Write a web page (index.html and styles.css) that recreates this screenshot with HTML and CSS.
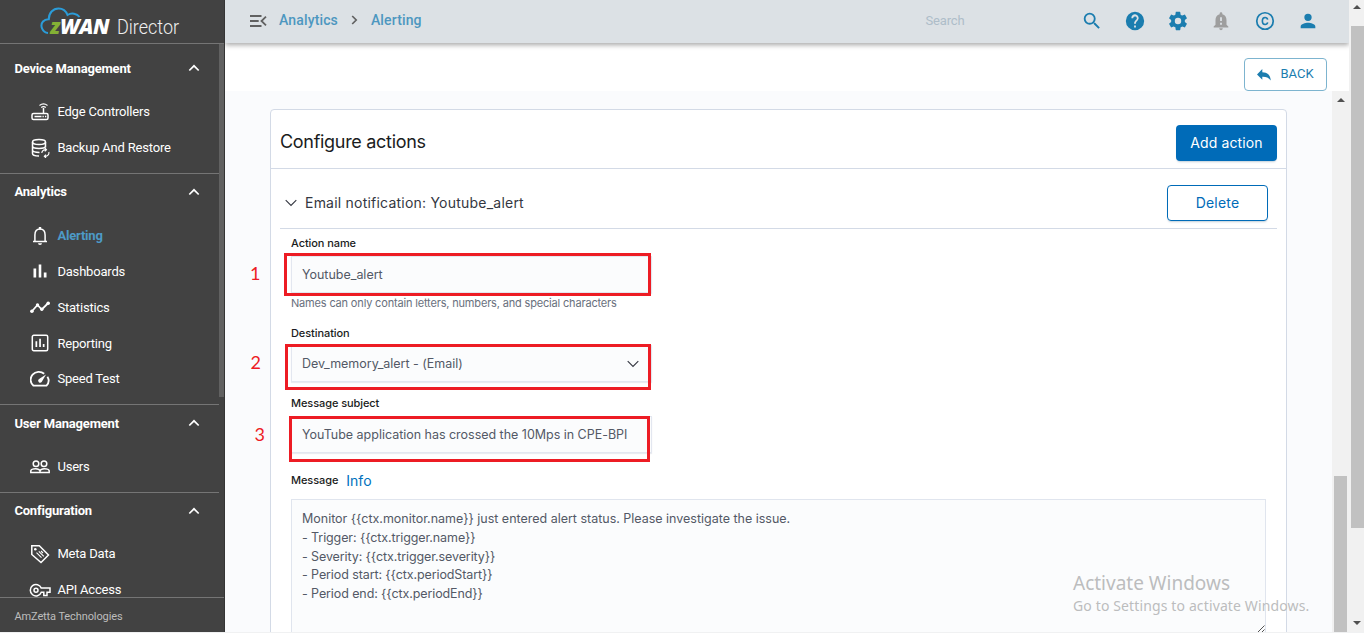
FILE: index.html
```html
<!DOCTYPE html>
<html lang="en">
<head>
<meta charset="utf-8">
<title>zWAN Director</title>
<link rel="stylesheet" href="styles.css">
</head>
<body>
<div class="app">
  <aside class="sidebar">
    <div class="brand">
      <svg class="cloud" width="42" height="30" viewBox="0 0 42 30"><path d="M8 26C2.500 25.500 -.5 18.500 3 14.500C4.800 12.500 6.500 12.200 8.800 12.300C8.800 6 13 1.500 18.500 1.500C22.500 1.500 26 4 27.500 8C31.500 5.500 37 6.500 39.500 10" fill="none" stroke="#2b9cd8" stroke-width="2"/></svg>
      <span class="zwan"><span class="z">z</span>WAN</span><span class="director">Director</span>
    </div>
    <div class="side-body">
      <nav class="nav">
        <section class="group">
          <h3>Device Management<svg class="chev" width="12" height="8" viewBox="0 0 12 8"><path d="M1.300 6.500 6 1.800l4.700 4.700"/></svg></h3>
          <a><svg width="20" height="20" viewBox="0 0 20 20"><rect x="2" y="11.500" width="16" height="6" rx="1.500" class="ln"/><path d="M13.500 11.500V6" class="ln"/><path d="M9.500 3.500Q13.500 .3 17.500 3.500M11.200 5.500Q13.500 3.700 15.800 5.500" class="ln thin"/><path d="M4.500 14.600h7M12.500 14.600h1.300M15 14.600h1.300" class="ln"/></svg>Edge Controllers</a>
          <a><svg width="20" height="20" viewBox="0 0 20 20"><ellipse cx="9" cy="4" rx="6.500" ry="2.500" class="ln"/><path d="M2.500 4v11.500c0 1.500 3 2.500 6.500 2.500M15.500 4v5.500M2.500 8c0 3.300 13 3.300 13 0M2.500 12c0 1.600 3 2.400 7 2.400" class="ln"/><path d="M11.800 15a3.500 3.500 0 0 1 4-3.300M18.800 14a3.500 3.500 0 0 1-4 4.300M14.800 10l1.700 1.700-1.700 1.600M16 16.700l-1.700 1.600L16 20" class="ln thin"/></svg>Backup And Restore</a>
        </section>
        <section class="group">
          <h3>Analytics<svg class="chev" width="12" height="8" viewBox="0 0 12 8"><path d="M1.300 6.500 6 1.800l4.700 4.700"/></svg></h3>
          <a class="active"><svg width="20" height="20" viewBox="0 0 20 20"><path d="M3 15.500h14M4.900 15.500V9C4.900 5 7 3 10 3s5.100 2 5.100 6v6.500" class="ln"/><path d="M8 17.300h4a2 1.800 0 0 1-4 0zM8.800 1h2.400v2.500H8.800z"/></svg>Alerting</a>
          <a><svg width="20" height="20" viewBox="0 0 20 20"><path d="M3.500 7.500h2.700v9H3.500zM8.700 3.500h2.600v13H8.700zM13.800 11.500h2.700v5h-2.700z"/></svg>Dashboards</a>
          <a><svg width="20" height="20" viewBox="0 0 20 20"><path d="M1.700 14.500 7.500 8l4.300 4.500L18.300 6" class="ln heavy"/><circle cx="1.900" cy="14.300" r="1.800"/><circle cx="7.500" cy="8" r="1.700"/><circle cx="11.800" cy="12.300" r="1.700"/><circle cx="18.200" cy="6.300" r="1.800"/></svg>Statistics</a>
          <a><svg width="20" height="20" viewBox="0 0 20 20"><rect x="2.300" y="2.300" width="15.400" height="15.400" rx="1.500" class="ln"/><path d="M5.500 8.300h1.700V14H5.500zM9.200 5.800h1.700V14H9.200zM12.800 11h1.700v3h-1.700z"/></svg>Reporting</a>
          <a><svg width="20" height="20" viewBox="0 0 20 20"><path d="M14.200 4.800A8 7.600 0 0 0 3.500 16.700h13a8 7.600 0 0 0 .9-8.900" class="ln heavy"/><path d="M16 5.500 11.700 13a2 2 0 1 1-3-2.700z"/></svg>Speed Test</a>
        </section>
        <section class="group low">
          <h3>User Management<svg class="chev" width="12" height="8" viewBox="0 0 12 8"><path d="M1.300 6.500 6 1.800l4.700 4.700"/></svg></h3>
          <a><svg width="20" height="20" viewBox="0 0 20 20"><circle cx="6" cy="6.800" r="2.800" class="ln"/><circle cx="14" cy="6.800" r="2.800" class="ln"/><path d="M.8 15.600v-1.800C1.200 12.300 4 11.800 5.700 11.800s3.800.6 4.300 2c.5-1.400 2.500-2 4.300-2s4.500.5 4.900 2v1.800zM10 13.500v2" class="ln"/></svg>Users</a>
        </section>
        <section class="group last">
          <h3>Configuration<svg class="chev" width="12" height="8" viewBox="0 0 12 8"><path d="M1.300 6.500 6 1.800l4.700 4.700"/></svg></h3>
          <a><svg width="20" height="20" viewBox="0 0 20 20"><path d="M1.800 1.800h7.500L18.500 11 11 18.500l-9.200-8z" class="ln"/><circle cx="5.300" cy="5.300" r="1.300"/><path d="m6.500 8.700 5 5M8.800 7.300l5 5M11 7l2 2" class="ln thin"/></svg>Meta Data</a>
          <a><svg class="key" width="22" height="20" viewBox="0 0 22 20"><path d="M12.300 8.100A5.700 5.700 0 1 0 12.300 12.300H14.800V15.500H18V12.300H21V8.100z" class="ln"/><circle cx="7" cy="10.200" r="2" class="ln"/></svg>API Access</a>
        </section>
      </nav>
      <div class="side-track"><div class="side-thumb"></div></div>
    </div>
    <footer class="side-foot">AmZetta Technologies</footer>
  </aside>

  <main class="main">
    <header class="topbar">
      <svg class="menu" width="18" height="14" viewBox="0 0 18 14"><path d="M1 2h11.500M1 7h8.700M1 12h11.500M17 2.700 12.500 7l4.500 4.300"/></svg>
      <span class="crumb">Analytics</span>
      <svg class="sep" width="7" height="10" viewBox="0 0 7 10"><path d="m1.200 1 4 4-4 4"/></svg>
      <span class="crumb">Alerting</span>
      <span class="search">Search</span>
      <div class="tools">
        <svg viewBox="0 0 24 24"><path d="M15.500 14h-.8l-.3-.3A6.500 6.500 0 0 0 16 9.500 6.500 6.500 0 1 0 9.500 16c1.600 0 3.100-.6 4.200-1.600l.3.300v.8l5 5 1.500-1.500zm-6 0a4.500 4.500 0 1 1 0-9 4.500 4.500 0 0 1 0 9z"/></svg>
        <svg viewBox="0 0 24 24"><path d="M12 2a10 10 0 1 0 0 20 10 10 0 0 0 0-20zm1 17h-2v-2h2zm2.070-7.750-.9.920C13.450 12.900 13 13.500 13 15h-2v-.5c0-1.100.45-2.100 1.170-2.830l1.240-1.260A2 2 0 1 0 10 9H8a4 4 0 1 1 7.070 2.250z"/></svg>
        <svg viewBox="0 0 24 24"><path d="M19.430 12.980c.04-.32.070-.64.070-.98s-.03-.66-.07-.98l2.110-1.650c.19-.15.24-.42.12-.64l-2-3.460c-.12-.22-.39-.3-.61-.22l-2.490 1c-.52-.4-1.080-.73-1.690-.98l-.38-2.650A.49.490 0 0 0 14 2h-4c-.25 0-.46.180-.49.420l-.38 2.650c-.61.250-1.170.590-1.690.980l-2.490-1c-.23-.09-.49 0-.61.220l-2 3.460c-.13.220-.07.490.12.640l2.110 1.650c-.04.320-.07.650-.07.980s.03.660.07.980l-2.110 1.650c-.19.150-.24.420-.12.640l2 3.460c.12.220.39.300.61.220l2.490-1c.52.400 1.080.730 1.690.980l.38 2.650c.03.240.24.420.49.420h4c.25 0 .46-.18.490-.42l.38-2.650c.61-.25 1.170-.59 1.690-.98l2.490 1c.23.090.49 0 .61-.22l2-3.460c.12-.22.070-.49-.12-.64zM12 15.500a3.500 3.500 0 1 1 0-7 3.500 3.500 0 0 1 0 7z"/></svg>
        <svg class="muted" viewBox="0 0 24 24"><path d="M18 16v-5c0-3.070-1.640-5.640-4.500-6.320V4a1.500 1.500 0 0 0-3 0v.68C7.630 5.360 6 7.920 6 11v5l-2 2v1h16v-1zm-5 0h-2v-2h2zm0-4h-2V8h2zm-1 10a2 2 0 0 0 2-2h-4a2 2 0 0 0 2 2z"/></svg>
        <svg viewBox="0 0 24 24"><circle cx="12" cy="12" r="9" fill="none" stroke="currentColor" stroke-width="1.900"/><path d="M14.900 10.600C14.600 9 13.500 8.200 12.100 8.200 10 8.200 9.100 9.700 9.100 12s.9 3.800 3 3.800c1.400 0 2.500-.7 2.800-2.300" fill="none" stroke="currentColor" stroke-width="1.700"/></svg>
        <svg viewBox="0 0 24 24"><path d="M12 12a4 4 0 1 0 0-8 4 4 0 0 0 0 8zm0 2c-2.670 0-8 1.340-8 4v2h16v-2c0-2.660-5.330-4-8-4z"/></svg>
      </div>
    </header>
    <div class="backbar">
      <button class="back"><svg width="14" height="12" viewBox="0 0 14 12"><path d="M5.300 0v3.300C10.500 3.300 13.300 6 13.800 11.500 11.500 8.500 9 7.700 5.300 7.800v3L0 5.500z"/></svg><span>BACK</span></button>
    </div>
    <div class="content">
      <div class="card">
        <div class="card-head"><h2>Configure actions</h2><button class="primary">Add action</button></div>
        <div class="acc-head">
          <svg width="12" height="8" viewBox="0 0 12 8"><path d="M.7 1.200 6 6.500l5.300-5.300"/></svg>
          <span class="acc-title">Email notification: Youtube_alert</span>
          <button class="outline">Delete</button>
        </div>
        <div class="form">
          <label class="lab-name">Action name</label>
          <div class="field"><span>Youtube_alert</span><div class="mark m1"><b>1</b></div></div>
          <div class="help">Names can only contain letters, numbers, and special characters</div>
          <label class="lab-dest">Destination</label>
          <div class="field"><span>Dev_memory_alert - (Email)</span><svg width="12" height="8" viewBox="0 0 12 8"><path d="M.7 1.200 6 6.500l5.300-5.300"/></svg><div class="mark m2"><b>2</b></div></div>
          <label class="lab-subj">Message subject</label>
          <div class="field subject"><span>YouTube application has crossed the 10Mps in CPE-BPI</span><div class="mark m3"><b>3</b></div></div>
          <div class="msg-row"><label>Message</label><a>Info</a></div>
          <div class="area"><p class="first">Monitor {{ctx.monitor.name}} just entered alert status. Please investigate the issue.</p><p>- Trigger: {{ctx.trigger.name}}</p><p>- Severity: {{ctx.trigger.severity}}</p><p>- Period start: {{ctx.periodStart}}</p><p>- Period end: {{ctx.periodEnd}}</p>
            <svg class="grip" width="8" height="8" viewBox="0 0 8 8"><path d="M.5 7.500l7-7M4.500 7.500l3-3"/></svg></div>
        </div>
      </div>
      <div class="track inner"><i class="up"></i><div class="thumb"></div></div>
    </div>
  </main>
  <div class="track outer"><i class="up"></i><div class="thumb"></div><i class="down"></i></div>
  <div class="watermark"><div class="w1">Activate Windows</div><div class="w2">Go to Settings to activate Windows.</div></div>
</div>
</body>
</html>
```
FILE: styles.css
```css
* { box-sizing: border-box; margin: 0; padding: 0; }
body { background: #f0f1f2; font-family: Inter, sans-serif; overflow: hidden; }
button { font: inherit; background: #fff; display: flex; align-items: center; justify-content: center; white-space: nowrap; }
.app { display: grid; grid-template-columns: 225px 1124px 15px; height: 632px; width: 1364px; position: relative; overflow: hidden; }

/* Sidebar */
.sidebar { background: #424242; color: #fff; font-family: Roboto, sans-serif; display: flex; flex-direction: column; height: 632px; min-height: 0; border-right: 1px solid #353535; }
.brand { height: 44px; flex: none; border-bottom: 1px solid #757575; display: flex; align-items: baseline; padding: 14px 0 0 50px; position: relative; white-space: nowrap; }
.cloud { position: absolute; left: 40px; top: 7px; }
.zwan { font: italic 800 21px/24px "Open Sans", sans-serif; letter-spacing: -.3px; width: 67px; }
.z { color: #84b135; }
.director { font-size: 20px; line-height: 26px; font-weight: 300; color: #f0f0f0; transform: scaleX(.9); transform-origin: left; }
.side-body { flex: 1; min-height: 0; display: flex; overflow: hidden; }
.nav { width: 219px; flex: none; }
.side-track { width: 5px; }
.side-thumb { height: 353px; background: #616161; }
.group { border-bottom: 1px solid #757575; padding-bottom: 7.200px; font-size: 13px; }
.group:first-child { padding-top: 6px; }
.group h3 { height: 44px; padding: 0 19px 8px 14.400px; display: flex; align-items: center; justify-content: space-between; font-size: 13px; font-weight: 700; letter-spacing: -.18px; }
.group.low h3 { padding-bottom: 7px; }
.group.last h3 { height: 43px; padding-bottom: 7px; }
.chev { fill: none; stroke: #fff; stroke-width: 1.700; }
.group a { height: 35.800px; display: flex; align-items: center; gap: 7.400px; padding-left: 30px; letter-spacing: -.19px; font-weight: 400; }
.group a svg { fill: #fff; flex: none; }
.group a .key { margin: 0 -1px; }
.group a.active { color: #4d9ac7; font-weight: 700; }
.ln { fill: none; stroke: #fff; stroke-width: 1.500; }
.group a .thin { stroke-width: 1.100; }
.group a .heavy { stroke-width: 1.800; }
.side-foot { height: 35px; flex: none; border-top: 1px solid #757575; padding-left: 14.400px; font-size: 11px; line-height: 37px; letter-spacing: -.1px; color: #bdbdbd; }

/* Header */
.main { background: #fff; display: flex; flex-direction: column; min-width: 0; height: 632px; }
.topbar { height: 43px; flex: none; background: #dce1e5; box-shadow: 0 2px 5px rgba(0,0,0,.35); display: flex; align-items: center; padding: 0 30px 2px 24px; font-family: Roboto, sans-serif; position: relative; clip-path: inset(0 0 -10px 0); }
.menu { fill: none; stroke: #616161; stroke-width: 1.800; margin-right: 12px; }
.crumb { color: #4d97c0; font-size: 14px; font-weight: 500; letter-spacing: .14px; padding-bottom: 2px; }
.sep { fill: none; stroke: #616161; stroke-width: 1.700; margin: 0 13px 2px; }
.search { margin-left: auto; margin-right: 116px; color: #aebdc9; font-size: 13px; letter-spacing: -.15px; }
.tools { display: flex; gap: 21.300px; color: #1b7daf; }
.tools svg { width: 22px; height: 22px; fill: currentColor; }
.tools .muted { color: #9e9e9e; }
.backbar { height: 48px; flex: none; display: flex; justify-content: flex-end; padding: 15px 22px 0 0; }
.back { width: 83px; height: 33px; border: 1px solid #7db4cf; border-radius: 4px; font-family: Roboto, sans-serif; font-size: 13px; color: #1b7daf; gap: 9px; }
.back svg { fill: #1b7daf; }
.back span { padding-bottom: 2px; }

/* Content */
.content { flex: 1; min-height: 0; background: #fafbfd; display: flex; justify-content: space-between; overflow: hidden; }
.card { margin: 18px 0 0 45px; width: 1017px; height: 560px; flex: none; background: #fff; border: 1px solid #d3dae6; border-radius: 4px; }
.card-head { height: 59px; border-bottom: 1px solid #d3dae6; display: flex; align-items: center; justify-content: space-between; padding: 8px 9px 0 9px; }
h2 { font-size: 18px; font-weight: 400; color: #1a1c21; letter-spacing: -.3px; line-height: 24px; margin-top: -2px; }
.primary { width: 101px; height: 36px; background: #006bb8; color: #fff; border: 0; border-radius: 4px; font-size: 14px; letter-spacing: .12px; padding-bottom: 2px; box-shadow: 0 2px 2px -1px rgba(54,97,126,.3); }
.acc-head { margin: 0 9px; height: 60px; border-bottom: 1px solid #d3dae6; display: flex; align-items: center; padding: 9px 9px 0 5px; }
.acc-head svg, .field svg { fill: none; stroke: #343741; stroke-width: 1.100; }
.acc-title { margin-left: 8px; padding-bottom: 2px; font-size: 14px; color: #343741; letter-spacing: .22px; }
.outline { margin-left: auto; width: 101px; height: 36px; border: 1px solid #006bb8; color: #006bb8; border-radius: 4px; font-size: 14px; letter-spacing: .2px; padding-bottom: 2px; box-shadow: 0 2px 2px -1px rgba(54,97,126,.3); }
.form { padding-left: 20px; }
label { display: block; font-size: 11px; line-height: 14px; font-weight: 500; letter-spacing: -.08px; color: #1a1c21; }
.lab-name { padding-top: 7px; height: 27px; }
.field { position: relative; width: 361px; height: 37px; border: 1px solid #e3e7f0; box-shadow: 0 1px 1px rgba(152,162,179,.2); background: #fbfcfd; display: flex; align-items: center; justify-content: space-between; padding: 0 12px 0 10px; font-size: 12.500px; letter-spacing: -.02px; color: #535966; white-space: nowrap; }
.help { height: 33px; padding-top: 3px; font-size: 11px; line-height: 14px; letter-spacing: -.17px; color: #69707d; }
.lab-dest { height: 19px; }
.lab-subj { padding-top: 14px; height: 34px; }
.mark { position: absolute; border: 3px solid #ed1c24; }
.mark b { position: absolute; font: 400 18px/22px Lato, sans-serif; color: #ed1c24; }
.m1 { left: -8px; top: -4px; width: 367px; height: 43px; }
.m1 b { left: -37px; top: 6px; }
.m2 { left: -7px; top: -2px; width: 366px; height: 46px; }
.m2 b { left: -37.500px; top: 4px; }
.m3 { left: -3px; top: -1px; width: 361px; height: 46px; }
.m3 b { left: -37.500px; top: 4px; }
.msg-row { display: flex; align-items: center; gap: 8px; height: 46px; padding-top: 9px; }
.msg-row label { padding-bottom: 2px; }
.msg-row a { color: #0071bd; font-size: 14px; line-height: 20px; padding-top: 1px; }
.area { position: relative; width: 975px; height: 134px; border: 1px solid #e0e5ee; border-bottom: 0; background: #fbfcfd; padding: 10px; color: #535966; font-size: 12.500px; line-height: 18.800px; letter-spacing: -.1px; }
.area .first { letter-spacing: -.01px; }
.grip { position: absolute; right: 0; bottom: 0; stroke: #555; }

/* Scrollbars */
.track { background: #f1f1f1; position: relative; display: flex; flex-direction: column; align-items: center; }
.thumb { background: #c1c1c1; width: 13px; }
.up, .down { width: 0; height: 0; border: 4px solid transparent; flex: none; }
.up { border-top: 0; border-bottom-color: #505050; }
.down { border-bottom: 0; border-top-color: #505050; }
.inner { width: 17px; padding-top: 7px; }
.inner .thumb { margin-top: 374px; height: 156px; flex: none; }
.outer { padding-top: 5px; align-items: flex-end; }
.outer .up, .outer .down { margin-right: 3px; }
.outer .thumb { margin-top: 17px; height: 502px; }
.outer .down { margin-top: 93px; }

.watermark { position: absolute; left: 1073px; top: 571px; font-family: "Noto Sans", sans-serif; color: #bcbdbe; white-space: nowrap; }
.w1 { font-size: 19px; line-height: 24px; }
.w2 { font-size: 14px; line-height: 22px; letter-spacing: .13px; }
```
